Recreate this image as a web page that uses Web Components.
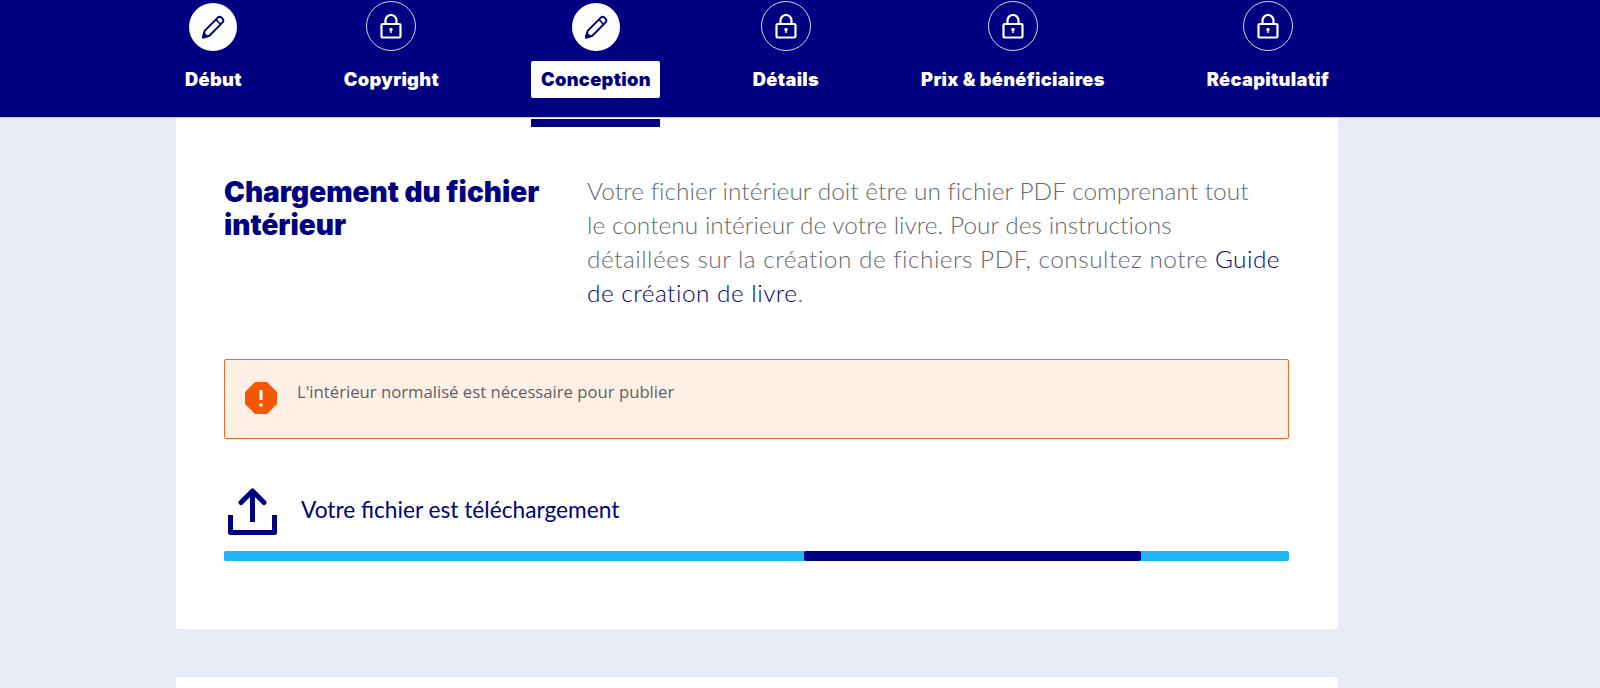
<!DOCTYPE html>
<html lang="fr">
<head>
<meta charset="utf-8">
<title>Conception</title>
<style>
  html, body { margin: 0; height: 688px; overflow: hidden; background: #e8ecf6; font-family: Lato, "Open Sans", sans-serif; }
</style>
</head>
<body>
<step-nav>
  <step-item state="edit">Début</step-item>
  <step-item state="lock">Copyright</step-item>
  <step-item state="edit" active>Conception</step-item>
  <step-item state="lock">Détails</step-item>
  <step-item state="lock">Prix &amp; bénéficiaires</step-item>
  <step-item state="lock">Récapitulatif</step-item>
</step-nav>
<page-card main>
  <upload-intro>
    <span slot="title">Chargement du fichier intérieur</span>
    Votre fichier intérieur doit être un fichier PDF comprenant tout<br>le contenu intérieur de votre livre. Pour des instructions<br><span style="letter-spacing:.5px">détaillées sur la création de fichiers PDF, consultez notre <a href="#" style="color:#000080;text-decoration:none">Guide<br>de création de livre</a>.</span>
  </upload-intro>
  <alert-box>L'intérieur normalisé est nécessaire pour publier</alert-box>
  <upload-progress>Votre fichier est téléchargement</upload-progress>
</page-card>
<page-card></page-card>

<script>
const pencil = `<svg width="26" height="26" viewBox="0 0 26 26" fill="none" stroke="#000080" stroke-width="2" stroke-linejoin="round">
  <path d="M3 23.500l1.600-6.600L17.800 3.600a2.600 2.600 0 0 1 3.700 0l1.100 1.100a2.600 2.600 0 0 1 0 3.700L9.400 21.700z" fill="#fff"/>
  <path d="M16 5.600l4.600 4.600" stroke-width="1.600"/>
  <path d="M3 23.500l1-4 3 3z" fill="#000080"/>
</svg>`;
const lock = `<svg width="22" height="25" viewBox="0 0 22 25" fill="none" stroke="#fff" stroke-width="2.200">
  <path d="M5.500 10V6.500a5.500 5.500 0 0 1 11 0V10"/>
  <rect x="1.500" y="10" width="19" height="13.500" rx="1.200"/>
  <circle cx="11" cy="15.500" r="1.700" fill="#fff" stroke="none"/>
  <path d="M11 15.500v3.500" stroke-width="1.500"/>
</svg>`;

class StepNav extends HTMLElement {
  constructor() {
    super();
    this.attachShadow({ mode: "open" });
    this.shadowRoot.innerHTML = `
      <style>
        :host { display: block; background: #000080; height: 117px; border-bottom: 1px solid #c9cdea; position: relative; z-index: 2; }
        .row { width: 1163px; margin-left: 175.500px; display: flex; justify-content: space-between; align-items: flex-start; }
      </style>
      <div class="row"><slot></slot></div>`;
  }
}

class StepItem extends HTMLElement {
  constructor() {
    super();
    this.attachShadow({ mode: "open" });
    const edit = this.getAttribute("state") === "edit";
    this.shadowRoot.innerHTML = `
      <style>
        :host { display: flex; flex-direction: column; align-items: center; position: relative; }
        .dot { box-sizing: border-box; width: 50px; height: 50px; margin-top: 1px; border-radius: 50%; display: flex; align-items: center; justify-content: center; border: 1px solid #d5d6ee; }
        .dot.edit { width: 48px; height: 48px; margin-top: 3px; background: #fff; border: 0; }
        .label { margin-top: 10px; padding: 0 9.500px; height: 37px; line-height: 37px; font-family: Inter, Lato, sans-serif; font-size: 18.300px; letter-spacing: .3px; font-weight: 900; color: #fff; border-radius: 2px; white-space: nowrap; }
        :host([active]) .label { background: #fff; color: #000080; }
        .bar { display: none; position: absolute; left: 0; right: 0; top: 119px; height: 8px; background: #000080; }
        :host([active]) .bar { display: block; }
      </style>
      <div class="dot ${edit ? "edit" : ""}">${edit ? pencil : lock}</div>
      <div class="label"><slot></slot></div>
      <div class="bar"></div>`;
  }
}

class PageCard extends HTMLElement {
  constructor() {
    super();
    this.attachShadow({ mode: "open" });
    this.shadowRoot.innerHTML = `
      <style>
        :host { display: block; box-sizing: border-box; width: 1162px; margin: 0 0 48px 175.500px; background: #fff; border-radius: 2px; min-height: 60px; }
        :host([main]) { height: 511px; padding: 57px 48.500px 0; border-radius: 0 0 3px 3px; }
      </style>
      <slot></slot>`;
  }
}

class UploadIntro extends HTMLElement {
  constructor() {
    super();
    this.attachShadow({ mode: "open" });
    this.shadowRoot.innerHTML = `
      <style>
        :host { display: flex; }
        h2 { margin: 1px 0 0; width: 363px; flex: none; font-family: Inter, Lato, sans-serif; font-size: 28px; line-height: 33px; font-weight: 900; color: #000080; }
        p { margin: -1px 0 0; font-size: 24.400px; line-height: 34px; font-weight: 300; letter-spacing: .05px; color: #66696f; white-space: nowrap; }
      </style>
      <h2><slot name="title"></slot></h2>
      <p><slot></slot></p>`;
  }
}

class AlertBox extends HTMLElement {
  constructor() {
    super();
    this.attachShadow({ mode: "open" });
    this.shadowRoot.innerHTML = `
      <style>
        :host { display: flex; box-sizing: border-box; height: 80px; margin-top: 49px; padding: 21px 20px 0; gap: 20px; background: #fff0e6; border: 1px solid #f46a25; border-radius: 2px; }
        svg { flex: none; margin-top: 1px; }
        span { font-family: "Open Sans", sans-serif; font-size: 16.700px; line-height: 22px; color: #5e6167; }
      </style>
      <svg width="32" height="32" viewBox="0 0 32 32">
        <path d="M10 0h12l10 10v12L22 32H10L0 22V10z" fill="#f55600"/>
        <path d="M16 8v10" stroke="#fff" stroke-width="3"/>
        <circle cx="16" cy="23" r="1.800" fill="#fff"/>
      </svg>
      <span><slot></slot></span>`;
  }
}

class UploadProgress extends HTMLElement {
  constructor() {
    super();
    this.attachShadow({ mode: "open" });
    this.shadowRoot.innerHTML = `
      <style>
        :host { display: block; margin-top: 48px; }
        .row { display: flex; align-items: center; gap: 24px; padding-left: 4px; height: 48px; font-size: 22.700px; color: #000080; }
        .row span { margin-top: -3px; }
        .track { margin-top: 16px; height: 10px; border-radius: 2px; background: #21b5f2; display: flex; }
        .fill { margin-left: 580px; width: 337px; border-radius: 2px; background: #000080; }
      </style>
      <div class="row">
        <svg width="49" height="47" viewBox="0 0 49 47" fill="none" stroke="#000080" stroke-width="5">
          <path d="M24.500 3v31"/>
          <path d="M13 14.500L24.500 3 36 14.500" stroke-linecap="round" stroke-linejoin="round"/>
          <path d="M2.500 27v17.500h44V27" stroke-linejoin="round"/>
        </svg>
        <span><slot></slot></span>
      </div>
      <div class="track"><div class="fill"></div></div>`;
  }
}

customElements.define("step-nav", StepNav);
customElements.define("step-item", StepItem);
customElements.define("page-card", PageCard);
customElements.define("upload-intro", UploadIntro);
customElements.define("alert-box", AlertBox);
customElements.define("upload-progress", UploadProgress);
</script>
</body>
</html>
